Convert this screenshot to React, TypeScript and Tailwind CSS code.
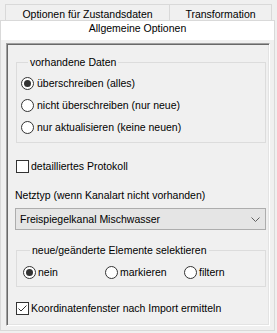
import React from "react";

function Radio({ checked }: { checked?: boolean }) {
  return (
    <span className="w-[13px] h-[13px] rounded-full border border-[#333333] bg-white flex items-center justify-center shrink-0">
      {checked && <span className="w-[7px] h-[7px] rounded-full bg-[#333333]" />}
    </span>
  );
}

function Check({ checked }: { checked?: boolean }) {
  return (
    <span className="w-[13px] h-[13px] border border-[#333333] bg-white flex items-center justify-center shrink-0">
      {checked && (
        <svg width="11" height="11" viewBox="0 0 11 11">
          <polyline points="1.5,5.5 4,8 9.5,2.5" fill="none" stroke="#333333" strokeWidth="1" />
        </svg>
      )}
    </span>
  );
}

export default function App() {
  return (
    <div className="w-[277px] h-[333px] bg-[#f0f0f0] overflow-hidden text-black text-[10.5px] leading-[13px] font-['Liberation_Sans',Arial,sans-serif]">
      {/* row 1 tabs */}
      <div className="mt-[4px] ml-[5px] flex h-[16px]">
        <div className="w-[164px] border-l border-t border-[#d9d9d9] bg-[#f0f0f0] flex justify-center pt-[3px]">
          Optionen für Zustandsdaten
        </div>
        <div className="w-[103px] border-l border-t border-r border-[#d9d9d9] bg-[#f0f0f0] flex justify-center pt-[3px]">
          Transformation
        </div>
      </div>
      {/* row 2 selected tab */}
      <div className="w-[275px] h-[20px] bg-white border-l border-t border-r border-[#d9d9d9] flex justify-center pt-[1px]">
        Allgemeine Optionen
      </div>
      {/* tab page */}
      <div className="w-[275px] h-[291px] bg-[#f0f0f0] border-l border-r border-b border-[#d9d9d9] pt-[3px] pl-[5px]">
        <div className="w-[264px] h-[283px] border-t border-l border-[#a0a0a0] border-r border-b border-r-white border-b-white shadow-[inset_1px_1px_0_#696969,inset_-1px_-1px_0_#e3e3e3] flex flex-col">
          {/* group 1 */}
          <fieldset className="mt-[12px] ml-[9px] w-[250px] border border-[#dcdcdc] pt-[3px] pb-[4px] pl-[4px]">
            <legend className="ml-[7px] px-[2px] leading-[13px]">vorhandene Daten</legend>
            <div className="h-[22px] flex items-center gap-[3px]">
              <Radio checked />
              <span>überschreiben (alles)</span>
            </div>
            <div className="h-[22px] flex items-center gap-[3px]">
              <Radio />
              <span>nicht überschreiben (nur neue)</span>
            </div>
            <div className="h-[22px] flex items-center gap-[3px]">
              <Radio />
              <span>nur aktualisieren (keine neuen)</span>
            </div>
          </fieldset>

          <div className="mt-[17px] ml-[9px] h-[13px] flex items-center gap-[2px]">
            <Check />
            <span>detailliertes Protokoll</span>
          </div>

          <div className="mt-[16px] ml-[8px] h-[13px]">Netztyp (wenn Kanalart nicht vorhanden)</div>

          <div className="mt-[6px] ml-[8px] w-[251px] h-[22px] border border-[#adadad] bg-[#e5e5e5] flex items-center justify-between pl-[4px] pr-[5px]">
            <span>Freispiegelkanal Mischwasser</span>
            <svg width="9" height="6" viewBox="0 0 9 6" className="mt-[1px]">
              <polyline points="0.5,0.5 4.5,4.5 8.5,0.5" fill="none" stroke="#606060" strokeWidth="1" />
            </svg>
          </div>

          {/* group 2 */}
          <fieldset className="mt-[14px] ml-[9px] w-[250px] border border-[#dcdcdc] pt-[4px] pb-[3px] pl-[6px]">
            <legend className="ml-[7px] px-[2px] leading-[13px]">neue/geänderte Elemente selektieren</legend>
            <div className="h-[22px] flex items-center">
              <div className="w-[82px] flex items-center gap-[2px]">
                <Radio checked />
                <span>nein</span>
              </div>
              <div className="w-[79px] flex items-center gap-[2px]">
                <Radio />
                <span>markieren</span>
              </div>
              <div className="flex items-center gap-[2px]">
                <Radio />
                <span>filtern</span>
              </div>
            </div>
          </fieldset>

          <div className="mt-[15px] ml-[9px] h-[13px] flex items-center gap-[2px]">
            <Check checked />
            <span>Koordinatenfenster nach Import ermitteln</span>
          </div>
        </div>
      </div>
    </div>
  );
}
